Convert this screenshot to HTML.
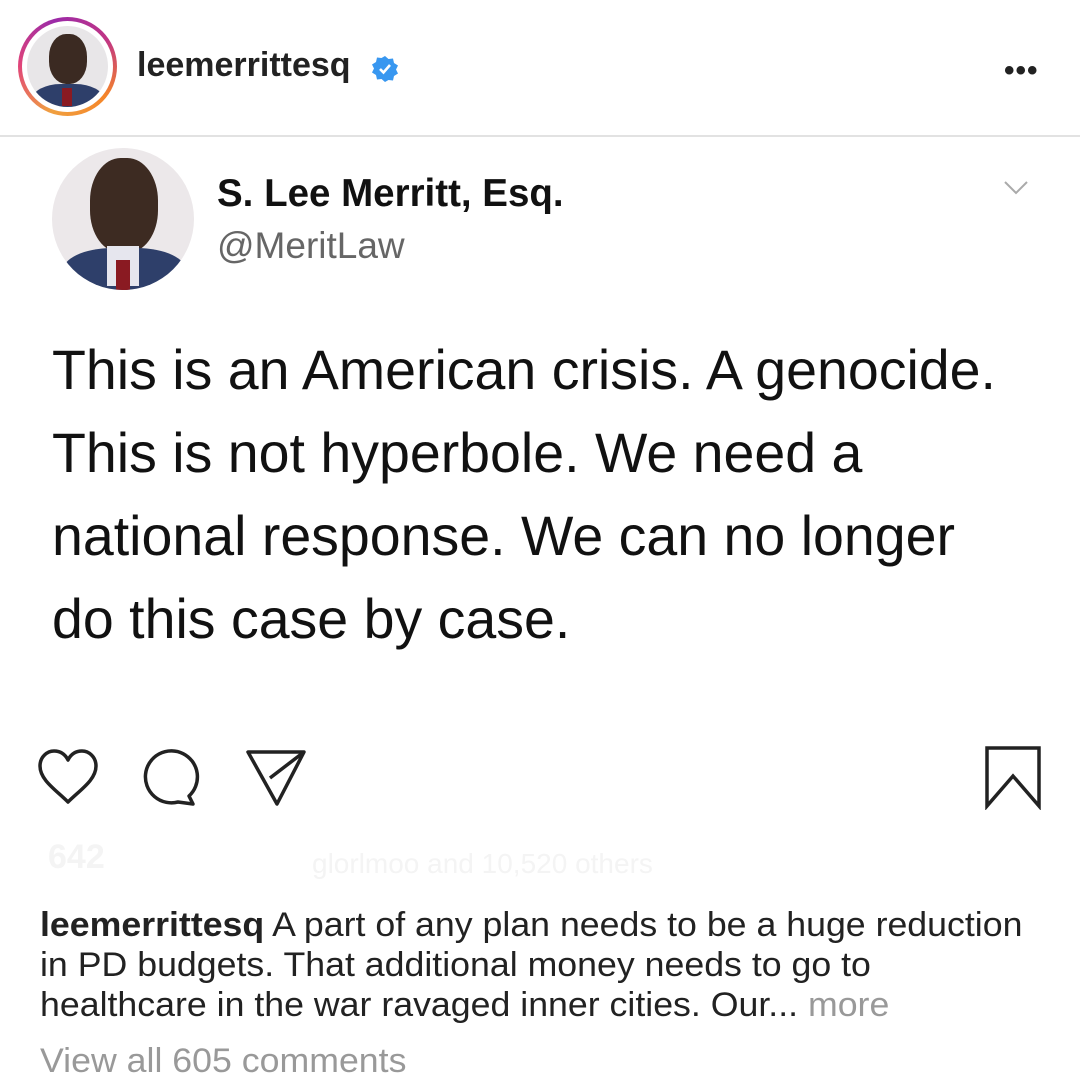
<!DOCTYPE html>
<html><head><meta charset="utf-8"><style>
*{margin:0;padding:0;box-sizing:border-box}
body{width:1080px;height:1080px;background:#fff;font-family:"Liberation Sans",sans-serif;position:relative;overflow:hidden;color:#111}
.abs{position:absolute;white-space:nowrap}
</style></head><body>
<div class="abs" style="left:18px;top:17px;width:99px;height:99px;border-radius:50%;background:conic-gradient(from 200deg,#f0a040,#e0447a,#9b2aa8,#c13584,#f58529,#f0a040);"></div>
<div class="abs" style="left:22px;top:21px;width:91px;height:91px;border-radius:50%;background:#fff"></div>
<div class="abs" style="left:27px;top:26px;width:81px;height:81px;border-radius:50%;overflow:hidden;background:#e8e6e8">
  <div style="position:absolute;left:22px;top:8px;width:38px;height:50px;border-radius:45%;background:#3b2a22"></div>
  <div style="position:absolute;left:5px;top:58px;width:72px;height:40px;border-radius:40% 40% 0 0;background:#2e3f6a"></div>
  <div style="position:absolute;left:35px;top:62px;width:10px;height:18px;background:#8a1a22"></div>
</div>
<div class="abs" style="left:137px;top:46px;font-size:34px;font-weight:bold;color:#222">leemerrittesq</div>
<svg class="abs" style="left:371px;top:55px" width="28" height="28" viewBox="0 0 28 28"><path d="M14 1l3.5 3 4.5-.5 1 4.5 4 2.5-2 4 2 4-4 2.5-1 4.5-4.5-.5L14 27l-3.5-3-4.5.5-1-4.5-4-2.5 2-4-2-4 4-2.5 1-4.5 4.5.5z" fill="#3897f0"/><path d="M9 14l3.5 3.5L19 10" stroke="#fff" stroke-width="2.6" fill="none"/></svg>
<div class="abs" style="left:1004px;top:54px;font-size:30px;font-weight:bold;letter-spacing:1px;color:#222">•••</div>
<div class="abs" style="left:0;top:135px;width:1080px;height:2px;background:#e2e2e2"></div>
<div class="abs" style="left:52px;top:148px;width:142px;height:142px;border-radius:50%;overflow:hidden;background:#ece8ea">
  <div style="position:absolute;left:38px;top:10px;width:68px;height:95px;border-radius:45%;background:#3d2b22"></div>
  <div style="position:absolute;left:10px;top:100px;width:125px;height:60px;border-radius:40% 40% 0 0;background:#2e3f6a"></div>
  <div style="position:absolute;left:55px;top:98px;width:32px;height:40px;background:#e6e6ee"></div>
  <div style="position:absolute;left:64px;top:112px;width:14px;height:30px;background:#8a1a22"></div>
</div>
<div class="abs" style="left:217px;top:172px;font-size:38.5px;font-weight:bold;color:#111">S. Lee Merritt, Esq.</div>
<div class="abs" style="left:217px;top:225px;font-size:37px;color:#666">@MeritLaw</div>
<svg class="abs" style="left:1003px;top:180px" width="26" height="16" viewBox="0 0 26 16"><path d="M2 2l11 11L24 2" stroke="#aaa" stroke-width="2" fill="none"/></svg>
<div class="abs" style="left:52px;top:329px;font-size:55.5px;line-height:83px;color:#111">This is an American crisis. A genocide.<br>This is not hyperbole. We need a<br>national response. We can no longer<br>do this case by case.</div>
<svg class="abs" style="left:36px;top:748px" width="64" height="58" viewBox="0 0 64 58"><path d="M32 54C20 42 4 32 4 18 4 9 11 3 18 3c6 0 11 3 14 9 3-6 8-9 14-9 7 0 14 6 14 15 0 14-16 24-28 36z" stroke="#222" stroke-width="3.5" fill="none" stroke-linejoin="round"/></svg>
<svg class="abs" style="left:142px;top:748px" width="62" height="60" viewBox="0 0 62 60"><path d="M47 48A26 26 0 1 0 36 54l15 2z" stroke="#222" stroke-width="3.5" fill="none" stroke-linejoin="round"/></svg>
<svg class="abs" style="left:244px;top:748px" width="64" height="60" viewBox="0 0 64 60"><path d="M4 4h56L33 56zM60 4L26 30" stroke="#222" stroke-width="3.5" fill="none" stroke-linejoin="round"/></svg>
<svg class="abs" style="left:984px;top:744px" width="58" height="66" viewBox="0 0 58 66"><path d="M3 4h52v58L29 32 3 62z" stroke="#222" stroke-width="3.5" fill="none" stroke-linejoin="miter"/></svg>
<div class="abs" style="left:48px;top:838px;font-size:34px;color:#f4f4f4;font-weight:bold">642</div>
<div class="abs" style="left:312px;top:848px;font-size:28px;color:#f4f4f4">glorlmoo and 10,520 others</div>
<div class="abs" style="left:40px;top:905px;font-size:34px;line-height:40px;color:#222;transform:scaleX(1.05);transform-origin:0 0"><b>leemerrittesq</b> A part of any plan needs to be a huge reduction<br>in PD budgets. That additional money needs to go to<br>healthcare in the war ravaged inner cities. Our... <span style="color:#999">more</span></div>
<div class="abs" style="left:40px;top:1042px;font-size:34px;color:#999;transform:scaleX(1.05);transform-origin:0 0">View all 605 comments</div>
</body></html>
